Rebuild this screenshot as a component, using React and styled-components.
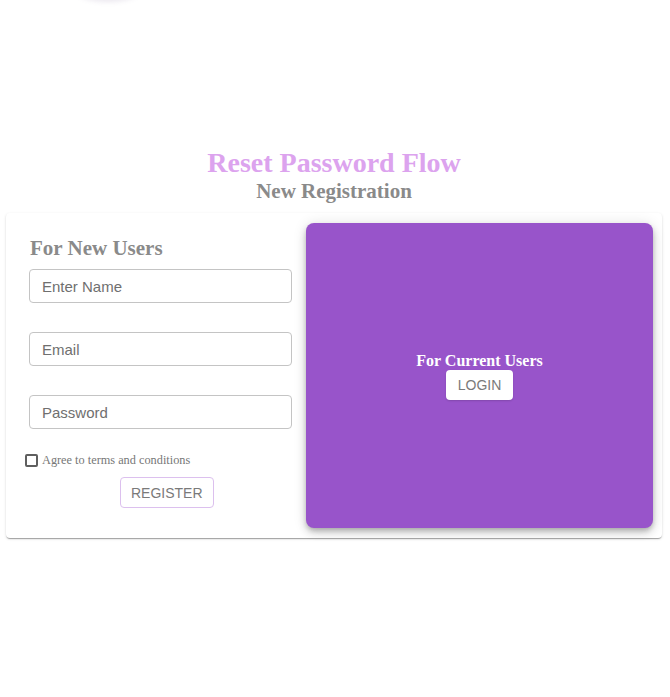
import React from "react";
import styled, { createGlobalStyle } from "styled-components";

const Global = createGlobalStyle`
  html, body { margin: 0; padding: 0; background: #fff; }
  body { font-family: "Liberation Serif", "Times New Roman", serif; }
  * { box-sizing: border-box; }
`;

const Page = styled.div`
  position: relative;
  width: 670px;
  min-height: 697px;
  padding: 147px 8px 0 6px;
  overflow: hidden;
`;

const TopGlow = styled.div`
  position: absolute;
  left: 68px;
  top: -40px;
  width: 80px;
  height: 40px;
  border-radius: 50%;
  box-shadow: 0 2px 5px rgba(120, 100, 150, 0.14);
`;

const Title = styled.h1`
  margin: 0;
  text-align: center;
  font-family: "Liberation Serif", serif;
  font-size: 28px;
  line-height: 32px;
  font-weight: bold;
  color: #dca3ee;
`;

const Subtitle = styled.h2`
  margin: 0;
  text-align: center;
  font-family: "Liberation Serif", serif;
  font-size: 21px;
  line-height: 24px;
  font-weight: bold;
  color: #8a8a8a;
`;

const Card = styled.div`
  margin-top: 10px;
  display: grid;
  grid-template-columns: 263px 347px;
  column-gap: 14px;
  padding: 10px 9px 10px 23px;
  background: #fff;
  border-radius: 4px;
  box-shadow: 0 2px 1px -1px rgba(0,0,0,0.2), 0 1px 1px 0 rgba(0,0,0,0.14), 0 1px 3px 0 rgba(0,0,0,0.12);
`;

const FormCol = styled.div`
  display: flex;
  flex-direction: column;
  padding-top: 13px;
`;

const SectionHeading = styled.h3`
  margin: 0 0 9px 1px;
  font-family: "Liberation Serif", serif;
  font-size: 21px;
  line-height: 24px;
  font-weight: bold;
  color: #8a8a8a;
`;

const Input = styled.input`
  display: block;
  width: 263px;
  height: 34px;
  margin-bottom: ${(p) => (p.$last ? "22px" : "29px")};
  padding: 0 12px;
  border: 1px solid #c4c4c4;
  border-radius: 4px;
  font-family: "Liberation Sans", Arial, sans-serif;
  font-size: 15px;
  color: #666;
  outline: none;
  &::placeholder { color: #6f6f6f; }
`;

const CheckRow = styled.label`
  display: flex;
  align-items: center;
  gap: 4px;
  margin-left: -4px;
  height: 18px;
  font-family: "Liberation Serif", serif;
  font-size: 12.3px;
  color: #777;
`;

const Box = styled.span`
  display: inline-block;
  width: 13px;
  height: 13px;
  border: 2px solid #5f5f5f;
  border-radius: 2px;
`;

const OutlineButton = styled.button`
  align-self: flex-start;
  margin: 8px 0 0 91px;
  height: 31px;
  padding: 0 10px;
  background: #fff;
  border: 1px solid #dcc0ee;
  border-radius: 4px;
  font-family: "Liberation Sans", Arial, sans-serif;
  font-size: 14px;
  color: #7a7a7a;
`;

const Panel = styled.div`
  height: 305px;
  background: #9854ca;
  border-radius: 8px;
  box-shadow: 0 3px 5px -1px rgba(0,0,0,0.2), 0 5px 8px 0 rgba(0,0,0,0.14), 0 1px 14px 0 rgba(0,0,0,0.12);
  display: flex;
  flex-direction: column;
  align-items: center;
  justify-content: center;
`;

const PanelHeading = styled.h3`
  margin: 0;
  font-family: "Liberation Serif", serif;
  font-size: 16px;
  line-height: 19px;
  font-weight: bold;
  color: #fff;
`;

const SolidButton = styled.button`
  height: 30px;
  padding: 0 11.5px;
  background: #fff;
  border: none;
  border-radius: 4px;
  font-family: "Liberation Sans", Arial, sans-serif;
  font-size: 14px;
  color: #7a7a7a;
  box-shadow: 0 1px 2px rgba(0,0,0,0.15);
`;

export default function App() {
  return (
    <>
      <Global />
      <Page>
        <TopGlow />
        <Title>Reset Password Flow</Title>
        <Subtitle>New Registration</Subtitle>
        <Card>
          <FormCol>
            <SectionHeading>For New Users</SectionHeading>
            <Input placeholder="Enter Name" />
            <Input placeholder="Email" />
            <Input placeholder="Password" type="password" $last />
            <CheckRow>
              <Box />
              Agree to terms and conditions
            </CheckRow>
            <OutlineButton>REGISTER</OutlineButton>
          </FormCol>
          <Panel>
            <PanelHeading>For Current Users</PanelHeading>
            <SolidButton>LOGIN</SolidButton>
          </Panel>
        </Card>
      </Page>
    </>
  );
}
